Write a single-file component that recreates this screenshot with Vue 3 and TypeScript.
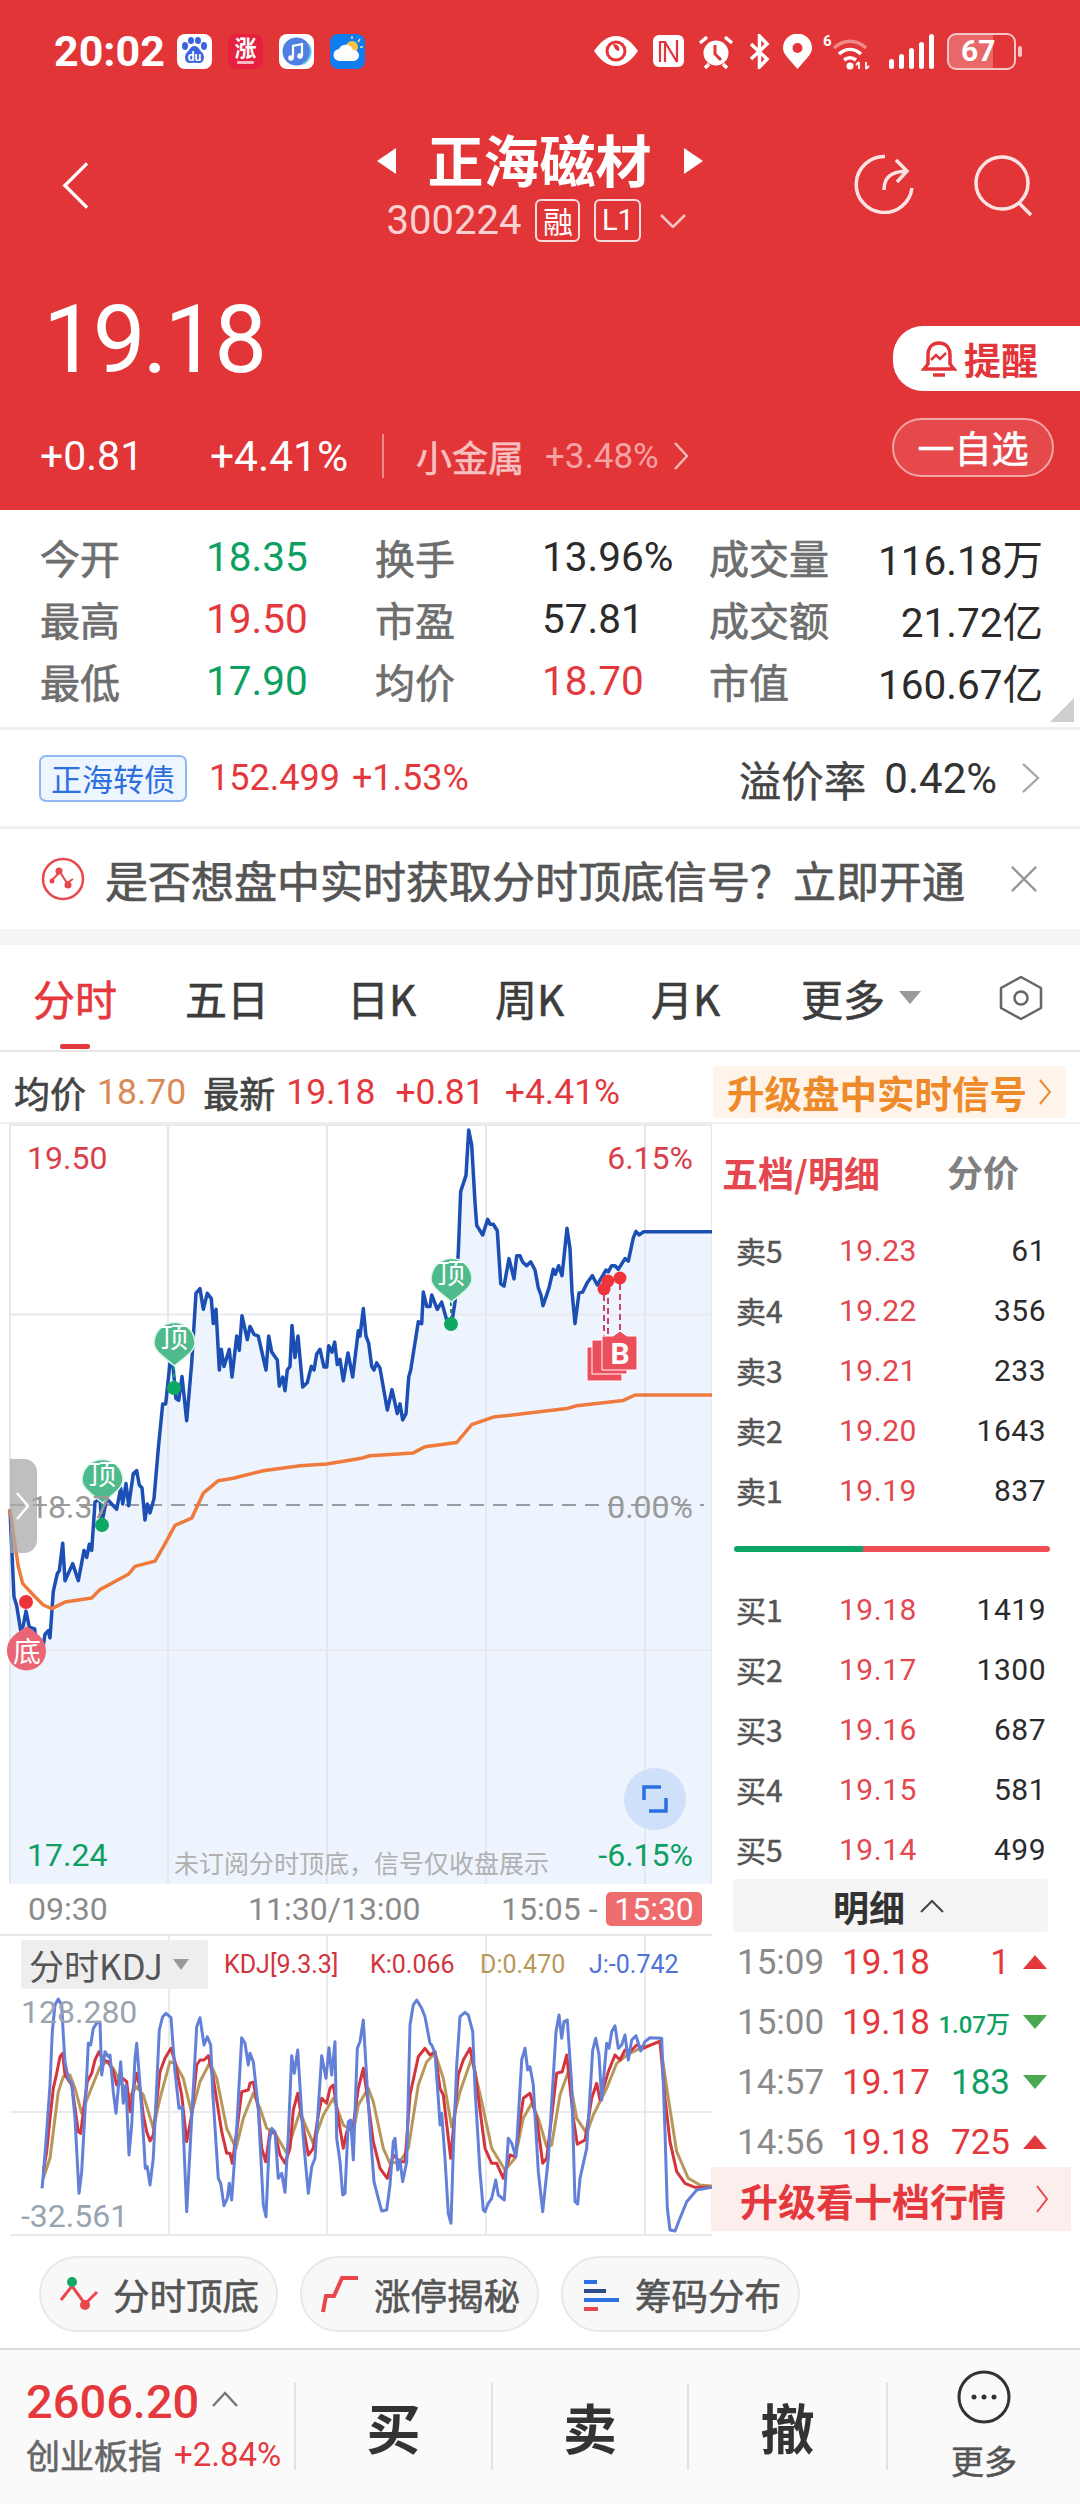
<template>
  <div class="page">
    <header class="hero">
      <div class="status">
        <div class="status-left">
          <span class="clock">20:02</span>
          <svg class="app" viewBox="0 0 35 35"><rect width="35" height="35" rx="8" fill="#fff" /><g fill="#3b62e0"><ellipse cx="8" cy="12" rx="3" ry="4" /><ellipse cx="14" cy="6.500" rx="3" ry="3.600" /><ellipse cx="21" cy="6.500" rx="3" ry="3.600" /><ellipse cx="27" cy="12" rx="3" ry="4" /><path d="M17.500 12c-4 0-5 4-8 7-3 4-1 11 4 10 3-.5 5-.5 8 0 5 1 7-6 4-10-3-3-4-7-8-7z" /></g><text x="17.500" y="27" text-anchor="middle" class="app-du">du</text></svg>
          <svg class="app app-gap" viewBox="0 0 35 35"><rect width="35" height="35" rx="8" fill="#e5213f" /><text x="17.500" y="22" text-anchor="middle" class="app-zhang">涨</text><rect x="9" y="27" width="17" height="3" rx="1" fill="#f8b8c2" /></svg>
          <svg class="app app-gap" viewBox="0 0 35 35"><rect width="35" height="35" rx="8" fill="#fff" /><circle cx="17.500" cy="17.500" r="14" fill="#4f7fe0" /><path d="M30 11a14 14 0 0 1-6 19" fill="none" stroke="#67c7e8" stroke-width="2" /><path d="M14 24V12l9-2v12" fill="none" stroke="#fff" stroke-width="2.200" /><circle cx="12" cy="24" r="2.800" fill="#fff" /><circle cx="21" cy="22" r="2.800" fill="#fff" /></svg>
          <svg class="app app-gap" viewBox="0 0 35 35"><rect width="35" height="35" rx="8" fill="#0f7cf0" /><circle cx="22" cy="13" r="6" fill="#f6c344" /><path d="M22 2v3M30 5l-2 3M33 13h-3" stroke="#f6e09a" stroke-width="1.500" /><path d="M10 27a6 6 0 0 1-1-12 7.500 7.500 0 0 1 14 1 5.500 5.500 0 0 1 1 11z" fill="#fff" /></svg>
        </div>
        <div class="status-right">
          <svg class="s-eye" viewBox="0 0 46 32"><path d="M1 16C8 6 15 1 23 1s15 5 22 15c-7 10-14 15-22 15S8 26 1 16z" fill="#fff" /><circle cx="23" cy="16" r="10.500" fill="#e33539" /><circle cx="23" cy="16" r="7.500" fill="#fff" /><path d="M20 9c5 0 7 3 6 7-3 0-5-3-6-7z" fill="#e33539" /></svg>
          <svg class="s-n" viewBox="0 0 31 32"><rect x="0" y="0" width="31" height="32" rx="6" fill="#fff" /><path d="M7 27V7l5 0v20M24 27V5M12 7l12 20" fill="none" stroke="#e33539" stroke-width="2.200" /></svg>
          <svg class="s-alarm" viewBox="0 0 36 35"><circle cx="18" cy="19" r="12.500" fill="#fff" /><path d="M17 11v9l6 6" fill="none" stroke="#e33539" stroke-width="3" /><path d="M2 9l7-6M34 9l-7-6M7 34l4-4M29 34l-4-4" fill="none" stroke="#fff" stroke-width="3.500" /></svg>
          <svg class="s-bt" viewBox="0 0 22 35"><path d="M3 10l16 15-7.500 8V2L19 10 3 25" fill="none" stroke="#fff" stroke-width="3.500" /></svg>
          <svg class="s-pin" viewBox="0 0 29 35"><path d="M14.500 35C6 25 0 20 0 14a14.500 14.500 0 0 1 29 0c0 6-6 11-14.500 21z" fill="#fff" /><circle cx="14.500" cy="14" r="5" fill="#e33539" /></svg>
          <svg class="s-wifi" viewBox="0 0 50 37"><text x="0" y="13" class="wifi-six">6</text><path d="M11 15c10-9 22-9 32 0" fill="none" stroke="#f08a88" stroke-width="3.500" /><path d="M16 21c7-6 15-6 22 0M21 27c4-3 8-3 12 0" fill="none" stroke="#fff" stroke-width="3.500" /><circle cx="27" cy="33" r="3.500" fill="#fff" /><path d="M36 36v-7M33 32l3-3M43 29v7M46 33l-3 3" stroke="#fff" stroke-width="1.800" fill="none" /></svg>
          <svg class="s-signal" viewBox="0 0 45 35"><g fill="#fff"><rect x="0" y="25" width="5" height="10" rx="2.500" /><rect x="10" y="20" width="5" height="15" rx="2.500" /><rect x="20" y="14" width="5" height="21" rx="2.500" /><rect x="30" y="8" width="5" height="27" rx="2.500" /><rect x="40" y="0" width="5" height="35" rx="2.500" /></g></svg>
          <div class="battery"><span class="battery-num">67</span></div>
          <i class="battery-tip"></i>
        </div>
      </div>

      <div class="nav">
        <svg class="back" viewBox="0 0 28 50"><path d="M26 2L3 25l23 23" fill="none" stroke="#fff" stroke-width="3.500" /></svg>
        <div class="nav-center">
          <div class="title-row">
            <i class="arrow-left"></i>
            <span class="title">正海磁材</span>
            <i class="arrow-right"></i>
          </div>
          <div class="code-row">
            <span class="code">300224</span>
            <span class="code-tag">融</span>
            <span class="code-tag code-tag-l1">L1</span>
            <svg class="code-chev" viewBox="0 0 26 14"><path d="M1 1l12 12L25 1" fill="none" stroke="#f7c4c4" stroke-width="2.500" /></svg>
          </div>
        </div>
        <div class="nav-right">
          <svg class="share" viewBox="0 0 60 60"><path d="M31 2.500A28 28 0 1 0 58 34" fill="none" stroke="#fce3e3" stroke-width="3.500" /><path d="M30 36c0-12 6-18 22-19M42 6l11 11-10 11" fill="none" stroke="#fce3e3" stroke-width="3.500" /></svg>
          <svg class="search" viewBox="0 0 60 62"><circle cx="29" cy="29" r="26" fill="none" stroke="#fce3e3" stroke-width="3.500" /><path d="M46 49l12 12" stroke="#fce3e3" stroke-width="3.500" /></svg>
        </div>
      </div>

      <div class="quote">
        <div class="quote-left">
          <div class="price">19.18</div>
          <div class="changes">
            <span class="chg-a">+0.81</span>
            <span class="chg-b">+4.41%</span>
            <i class="chg-sep"></i>
            <span class="sector">小金属</span>
            <span class="sector-pct">+3.48%</span>
            <svg class="sector-chev" viewBox="0 0 14 28"><path d="M1 1l12 13L1 27" fill="none" stroke="#f5b5b5" stroke-width="2.500" /></svg>
          </div>
        </div>
        <div class="quote-right">
          <div class="btn-remind">
            <svg class="bell" viewBox="0 0 36 38"><path d="M18 3c-7 0-11 5-11 12v9l-4 5h30l-4-5v-9C29 8 25 3 18 3z" fill="none" stroke="#e33539" stroke-width="3.500" /><path d="M12 35h12" stroke="#e33539" stroke-width="3.500" /><path d="M10 20l5-5 4 4 6-6" fill="none" stroke="#e33539" stroke-width="2.500" /></svg>
            <span>提醒</span>
          </div>
          <div class="btn-fav">一自选</div>
        </div>
      </div>
    </header>

    <section class="stats">
      <template v-for="row in statRows" :key="row[0].label">
        <template v-for="(cell, i) in row" :key="cell.label">
          <span class="stat-label">{{ cell.label }}</span>
          <span class="stat-value" :class="[cell.color, { 'stat-end': i === 2 }]">{{ cell.value }}</span>
        </template>
      </template>
      <i class="stat-corner"></i>
    </section>

    <section class="bond">
      <span class="bond-tag">正海转债</span>
      <span class="bond-price">152.499</span>
      <span class="bond-pct">+1.53%</span>
      <span class="bond-spacer"></span>
      <span class="bond-label">溢价率</span>
      <span class="bond-rate">0.42%</span>
      <svg class="bond-chev" viewBox="0 0 20 32"><path d="M2 1l16 15L2 31" fill="none" stroke="#a8a8a8" stroke-width="2.500" /></svg>
    </section>

    <section class="notice">
      <svg class="notice-icon" viewBox="0 0 44 44"><circle cx="22" cy="22" r="20" fill="none" stroke="#e8474c" stroke-width="2.500" /><path d="M11 23l8-8 7 11 6-4" fill="none" stroke="#e8474c" stroke-width="2" /><circle cx="18" cy="14" r="3.500" fill="#e8474c" /><circle cx="11" cy="24" r="2.500" fill="#e8474c" /><circle cx="27" cy="28" r="3.500" fill="#e8474c" /></svg>
      <span class="notice-text">是否想盘中实时获取分时顶底信号？立即开通</span>
      <svg class="notice-close" viewBox="0 0 28 28"><path d="M1 1l26 26M27 1L1 27" stroke="#999" stroke-width="2.500" /></svg>
    </section>
    <div class="strip"></div>

    <nav class="tabs">
      <span class="tab tab-on">分时</span>
      <span class="tab">五日</span>
      <span class="tab">日K</span>
      <span class="tab">周K</span>
      <span class="tab">月K</span>
      <span class="tab tab-more">更多<i class="tab-tri"></i></span>
      <svg class="tab-gear" viewBox="0 0 44 46"><path d="M22 2l20 11v20L22 44 2 33V13z" fill="none" stroke="#666" stroke-width="2.500" stroke-linejoin="round" /><circle cx="22" cy="23" r="6.500" fill="none" stroke="#666" stroke-width="2.500" /></svg>
    </nav>

    <section class="info">
      <span class="info-group"><b class="info-label">均价</b><span class="c-orange">18.70</span></span>
      <span class="info-group"><b class="info-label">最新</b><span class="c-red">19.18</span></span>
      <span class="c-red info-a">+0.81</span>
      <span class="c-red info-b">+4.41%</span>
      <span class="info-up">升级盘中实时信号<svg class="info-chev" viewBox="0 0 12 26"><path d="M1 1l10 12L1 25" fill="none" stroke="#ee8a2a" stroke-width="2" /></svg></span>
    </section>

    <div class="trade">
      <div class="trade-left">
        <div class="chart">
          <svg class="chart-svg" viewBox="0 1124 712 760">
            <polygon :points="fillPoints" fill="#eef4fd" />
            <path v-for="x in gridX" :key="x" :d="`M${x} 1124V1884`" stroke="#e4e7ed" stroke-width="2" />
            <path d="M10 1314.500H712M10 1650H712M10 1125H712" stroke="#e8eaee" stroke-width="2" fill="none" />
            <path d="M10 1505H704" stroke="#9a9ca3" stroke-width="2" stroke-dasharray="14 9" fill="none" />
            <polyline :points="bluePoints" fill="none" stroke="#1c4fb4" stroke-width="3.500" stroke-linejoin="round" />
            <polyline :points="avgPoints" fill="none" stroke="#ee7a3d" stroke-width="3.500" stroke-linejoin="round" />

            <g v-for="m in topMarks" :key="m.x">
              <path :d="`M${m.x} ${m.cy + 46}V${m.cy + 22}`" stroke="#129e63" stroke-width="2" stroke-dasharray="4 3" />
              <circle :cx="m.x" :cy="m.cy + 50" r="7" fill="#0ea763" />
              <path :d="`M${m.x - 20} ${m.cy + 5}a20.500 20.500 0 1 1 41 0c0 8-10 14-20.500 23C${m.x - 10} ${m.cy + 19} ${m.x - 20} ${m.cy + 13} ${m.x - 20} ${m.cy + 5}z`" fill="#4fbb8c" stroke="#dff5ea" stroke-width="1.500" />
              <text :x="m.x" :y="m.cy + 10" text-anchor="middle" class="mark-text">顶</text>
            </g>

            <circle cx="26" cy="1602" r="7" fill="#ee333b" />
            <path d="M27 1626c7 6 19 11 19 25a19.500 19.500 0 0 1-39 0c0-14 12-19 20-25z" fill="#ea6675" />
            <text x="27" y="1662" text-anchor="middle" class="mark-text">底</text>

            <path d="M604 1295V1336M608 1288V1336M620 1284V1332" stroke="#d2406a" stroke-width="2" stroke-dasharray="6 4" />
            <circle cx="604" cy="1289" r="6.500" fill="#ee333b" />
            <circle cx="608" cy="1281" r="6.500" fill="#ee333b" />
            <circle cx="620" cy="1278" r="6.500" fill="#ee333b" />
            <rect x="587" y="1347" width="35" height="34" fill="#ea4f5b" stroke="#fff" stroke-width="1" />
            <rect x="592" y="1340" width="35" height="34" fill="#ea4f5b" stroke="#fff" stroke-width="1" />
            <path d="M602 1336h11l7-5 7 5h10v34h-35z" fill="#ea4f5b" stroke="#fff" stroke-width="1" />
            <text x="620" y="1364" text-anchor="middle" class="mark-b">B</text>

            <circle cx="655" cy="1799" r="31" fill="#cfe0fb" />
            <path d="M661 1787h-17v13M649 1811h17v-13" fill="none" stroke="#2c6fe0" stroke-width="3.500" />
          </svg>
          <span class="lbl lbl-tl">19.50</span>
          <span class="lbl lbl-tr">6.15%</span>
          <span class="lbl lbl-ml">18.37</span>
          <span class="lbl lbl-mr">0.00%</span>
          <span class="lbl lbl-bl">17.24</span>
          <span class="lbl lbl-br">-6.15%</span>
          <span class="chart-tip">未订阅分时顶底，信号仅收盘展示</span>
          <div class="handle">
            <svg viewBox="0 0 14 30"><path d="M1 1l12 14L1 29" fill="none" stroke="#fff" stroke-width="2.500" /></svg>
          </div>
        </div>

        <div class="axis">
          <span class="axis-a">09:30</span>
          <span class="axis-b">11:30/13:00</span>
          <span class="axis-c">15:05 -</span>
          <span class="axis-badge">15:30</span>
        </div>

        <div class="kdj">
          <svg class="kdj-svg" viewBox="0 1936 712 300">
            <path v-for="x in kdjGridX" :key="x" :d="`M${x} 1936V2236`" stroke="#e8eaee" stroke-width="2" />
            <path d="M10 2112H712M10 2235H712" stroke="#e8eaee" stroke-width="2" fill="none" />
            <polyline :points="dPoints" fill="none" stroke="#b8985a" stroke-width="3" stroke-linejoin="round" />
            <polyline :points="kPoints" fill="none" stroke="#d6343c" stroke-width="3" stroke-linejoin="round" />
            <polyline :points="jPoints" fill="none" stroke="#6380d8" stroke-width="3" stroke-linejoin="round" />
          </svg>
          <div class="kdj-head">
            <span class="kdj-chip">分时KDJ<i class="kdj-tri"></i></span>
            <span class="kdj-p kdj-red kdj-p1">KDJ[9.3.3]</span>
            <span class="kdj-p kdj-red kdj-p2">K:0.066</span>
            <span class="kdj-p kdj-tan kdj-p3">D:0.470</span>
            <span class="kdj-p kdj-blue kdj-p4">J:-0.742</span>
          </div>
          <span class="kdj-max">128.280</span>
          <span class="kdj-min">-32.561</span>
        </div>
      </div>

      <aside class="panel">
        <div class="panel-head">
          <span class="panel-title">五档/明细</span>
          <span class="panel-sub">分价</span>
        </div>
        <div v-for="r in sells" :key="r.name" class="level">
          <span class="level-name">{{ r.name }}</span>
          <span class="level-price">{{ r.price }}</span>
          <span class="level-vol">{{ r.vol }}</span>
        </div>
        <div class="ratio"><i class="ratio-green"></i><i class="ratio-red"></i></div>
        <div v-for="r in buys" :key="r.name" class="level">
          <span class="level-name">{{ r.name }}</span>
          <span class="level-price">{{ r.price }}</span>
          <span class="level-vol">{{ r.vol }}</span>
        </div>
        <div class="detail-head">
          <span>明细</span>
          <svg viewBox="0 0 24 14"><path d="M1 13L12 2l11 11" fill="none" stroke="#444" stroke-width="2" /></svg>
        </div>
        <div v-for="t in ticks" :key="t.time" class="tick">
          <span class="tick-time">{{ t.time }}</span>
          <span class="tick-price">{{ t.price }}</span>
          <span class="tick-vol" :class="[t.color, { 'tick-small': t.vol.length > 4 }]">{{ t.vol }}</span>
          <i :class="t.up ? 'tri-up' : 'tri-down'"></i>
        </div>
        <div class="panel-up">
          <span>升级看十档行情</span>
          <svg viewBox="0 0 12 28"><path d="M1 1l10 13L1 27" fill="none" stroke="#e8474c" stroke-width="2" /></svg>
        </div>
      </aside>
    </div>

    <section class="pills">
      <div class="pill">
        <svg viewBox="0 0 40 40"><path d="M2 26l11-14 13 18 12-12" fill="none" stroke="#e8474c" stroke-width="3" /><circle cx="13" cy="8" r="5" fill="#10a765" /><circle cx="26" cy="31" r="5" fill="#e8474c" /></svg>
        <span>分时顶底</span>
      </div>
      <div class="pill">
        <svg viewBox="0 0 40 40"><path d="M3 38l3-16h8l8-18h16" fill="none" stroke="#e8474c" stroke-width="4" /></svg>
        <span>涨停揭秘</span>
      </div>
      <div class="pill">
        <svg viewBox="0 0 40 40"><path d="M3 8h13" stroke="#2c6fe0" stroke-width="4" /><path d="M3 17h22" stroke="#2c4a8c" stroke-width="4" /><path d="M3 26h35" stroke="#2c6fe0" stroke-width="4" /><path d="M3 35h14" stroke="#e8474c" stroke-width="4" /></svg>
        <span>筹码分布</span>
      </div>
    </section>

    <footer class="bottom">
      <div class="cell cell-index">
        <div class="index-top">
          <span class="index-num">2606.20</span>
          <svg viewBox="0 0 26 16"><path d="M1 15L13 2l12 13" fill="none" stroke="#777" stroke-width="2.500" /></svg>
        </div>
        <div class="index-sub"><span class="index-name">创业板指</span><span class="index-pct">+2.84%</span></div>
      </div>
      <div class="cell cell-act">买</div>
      <div class="cell cell-act">卖</div>
      <div class="cell cell-act">撤</div>
      <div class="cell cell-more">
        <svg viewBox="0 0 54 54"><circle cx="27" cy="27" r="25" fill="none" stroke="#333" stroke-width="3" /><circle cx="17" cy="27" r="2.500" fill="#333" /><circle cx="27" cy="27" r="2.500" fill="#333" /><circle cx="37" cy="27" r="2.500" fill="#333" /></svg>
        <span>更多</span>
      </div>
    </footer>
  </div>
</template>

<script setup lang="ts">
type Pt = [number, number];

const statRows = [
  [
    { label: '今开', value: '18.35', color: 'c-green' },
    { label: '换手', value: '13.96%', color: 'c-dark' },
    { label: '成交量', value: '116.18万', color: 'c-dark' },
  ],
  [
    { label: '最高', value: '19.50', color: 'c-red' },
    { label: '市盈', value: '57.81', color: 'c-dark' },
    { label: '成交额', value: '21.72亿', color: 'c-dark' },
  ],
  [
    { label: '最低', value: '17.90', color: 'c-green' },
    { label: '均价', value: '18.70', color: 'c-red' },
    { label: '市值', value: '160.67亿', color: 'c-dark' },
  ],
];

const sells = [
  { name: '卖5', price: '19.23', vol: '61' },
  { name: '卖4', price: '19.22', vol: '356' },
  { name: '卖3', price: '19.21', vol: '233' },
  { name: '卖2', price: '19.20', vol: '1643' },
  { name: '卖1', price: '19.19', vol: '837' },
];
const buys = [
  { name: '买1', price: '19.18', vol: '1419' },
  { name: '买2', price: '19.17', vol: '1300' },
  { name: '买3', price: '19.16', vol: '687' },
  { name: '买4', price: '19.15', vol: '581' },
  { name: '买5', price: '19.14', vol: '499' },
];
const ticks = [
  { time: '15:09', price: '19.18', vol: '1', color: 'c-red', up: true },
  { time: '15:00', price: '19.18', vol: '1.07万', color: 'c-green', up: false },
  { time: '14:57', price: '19.17', vol: '183', color: 'c-green', up: false },
  { time: '14:56', price: '19.18', vol: '725', color: 'c-red', up: true },
];

const gridX = [10, 168, 327, 486, 645, 712];
const kdjGridX = [169, 327, 486, 645];
const topMarks = [
  { x: 102, cy: 1475 },
  { x: 174, cy: 1338 },
  { x: 451, cy: 1274 },
];

// traced from the reference, first half then second half of the day
const blueA: Pt[] = [[30,1090],[42,1335],[50,1360],[62,1430],[70,1415],[78,1375],[88,1420],[104,1425],[108,1460],[125,1500],[135,1440],[145,1430],[150,1450],[160,1320],[172,1270],[178,1262],[188,1185],[195,1290],[218,1242],[235,1290],[252,1205],[260,1225],[268,1188],[275,1205],[285,1070],[300,1060],[305,1130],[320,1060],[350,1090],[362,1030],[368,1075],[378,1018],[386,1080],[400,990],[410,982],[418,1022],[426,1030],[435,1120],[442,1075],[450,1100],[462,1060],[475,920],[488,795],[497,795],[510,680],[518,680],[528,780],[536,785],[546,718],[560,842],[575,680],[588,485],[600,472],[610,530],[622,485],[634,500],[640,570],[648,530],[658,700],[664,642],[672,690],[688,642],[696,720],[710,605],[718,645],[726,548],[742,615],[750,578],[762,600],[775,605],[798,700],[806,605],[815,650],[832,672],[838,745],[848,720],[855,758],[862,700],[870,690],[876,575],[885,665],[894,605],[908,748],[922,735],[934,690],[942,700],[950,655],[960,642],[972,692],[980,692],[986,632],[996,650],[1004,622],[1012,685],[1020,670],[1030,730],[1044,652],[1058,720],[1075,590]];
const blueB: Pt[] = [[0,605],[10,528],[18,605],[26,625],[35,690],[42,700],[50,680],[60,695],[82,812],[96,755],[112,822],[120,795],[128,840],[138,822],[146,720],[152,700],[175,565],[185,570],[190,482],[200,522],[210,522],[215,490],[232,530],[245,510],[260,560],[275,570],[285,510],[295,370],[302,200],[318,155],[326,28],[335,70],[345,230],[350,295],[368,322],[383,278],[390,292],[400,292],[412,310],[422,458],[432,465],[447,388],[462,445],[470,380],[480,380],[488,398],[500,408],[512,397],[525,420],[535,470],[543,490],[549,520],[567,470],[580,418],[586,432],[596,408],[606,436],[621,303],[630,360],[636,480],[645,570],[657,484],[668,482],[682,455],[697,436],[712,462],[738,420],[745,425],[755,408],[765,408],[775,418],[795,388],[805,395],[820,330],[828,312],[838,322],[850,313],[1056,313]];
const avgA: Pt[] = [[30,1090],[42,1170],[55,1250],[68,1298],[100,1330],[130,1358],[155,1368],[195,1350],[275,1338],[300,1315],[385,1272],[405,1250],[465,1235],[490,1195],[525,1135],[575,1115],[590,1085],[610,1045],[655,1010],[700,1003],[790,982],[900,968],[980,963],[1080,948]];
const avgB: Pt[] = [[30,940],[160,932],[195,915],[290,903],[335,853],[400,832],[620,808],[650,800],[790,785],[825,770],[1056,770]];

// KDJ lines, traced in two 3x crops of the lower panel
const jA: Pt[] = [[126,610],[130,570],[140,440],[150,300],[157,140],[165,60],[175,42],[185,60],[190,150],[195,230],[205,280],[215,295],[225,400],[237,625],[245,560],[255,380],[265,175],[272,180],[280,130],[292,112],[300,112],[305,270],[315,200],[325,215],[330,210],[340,320],[348,385],[362,230],[370,355],[378,300],[387,510],[395,420],[405,220],[410,175],[420,300],[432,480],[436,550],[442,545],[450,600],[460,520],[478,135],[488,95],[498,85],[513,98],[525,260],[537,370],[547,365],[560,680],[575,400],[590,125],[600,98],[612,180],[622,155],[632,180],[638,320],[655,580],[662,595],[672,662],[682,640],[688,595],[695,645],[710,430],[725,158],[735,175],[745,240],[750,205],[760,230],[775,370],[790,660],[798,695],[808,470],[815,430],[825,440],[835,580],[845,565],[855,622],[865,450],[875,212],[883,265],[893,195],[910,460],[925,625],[935,545],[945,520],[965,212],[978,280],[987,188],[995,270],[1005,170],[1010,460],[1020,530],[1028,630],[1035,625],[1045,410],[1052,405],[1060,525],[1072,190]];
const jB: Pt[] = [[0,170],[10,105],[20,280],[32,460],[42,590],[55,640],[65,678],[80,675],[90,600],[100,470],[105,460],[113,555],[120,525],[128,590],[140,530],[150,120],[160,60],[170,45],[185,70],[195,95],[210,175],[215,180],[225,205],[235,340],[240,420],[245,385],[255,520],[265,685],[273,715],[280,500],[290,240],[300,95],[315,82],[325,90],[338,140],[345,310],[360,560],[370,675],[375,680],[385,655],[395,640],[407,585],[415,630],[433,645],[445,460],[455,475],[468,515],[485,225],[495,190],[503,255],[510,245],[520,300],[535,560],[548,680],[565,520],[588,140],[597,90],[605,160],[612,110],[622,105],[635,300],[645,650],[653,657],[660,580],[680,490],[698,195],[707,160],[717,210],[725,345],[740,175],[747,190],[755,140],[765,122],[775,190],[785,180],[795,150],[805,225],[815,165],[828,152],[842,198],[855,170],[870,158],[905,160],[915,440],[922,670],[930,735],[945,738],[960,700],[980,650],[1010,615],[1055,607]];
const kA: Pt[] = [[130,560],[140,500],[150,400],[160,310],[170,265],[180,215],[188,205],[195,270],[205,285],[215,300],[225,370],[235,440],[242,445],[250,380],[262,290],[275,265],[285,225],[297,200],[310,225],[325,230],[340,260],[350,300],[362,275],[380,290],[390,380],[400,310],[410,265],[420,310],[430,390],[440,440],[450,468],[460,450],[470,350],[480,260],[495,220],[513,190],[525,230],[537,290],[545,330],[560,470],[575,390],[590,240],[600,225],[612,225],[625,212],[640,280],[650,345],[665,440],[680,505],[690,505],[697,535],[710,440],[725,320],[745,315],[750,295],[760,292],[775,370],[785,490],[797,530],[810,440],[825,445],[840,510],[855,535],[870,490],[880,375],[893,325],[905,400],[925,510],[940,490],[955,390],[965,340],[980,355],[990,310],[1000,300],[1015,400],[1030,490],[1040,440],[1060,420],[1075,310]];
const kB: Pt[] = [[10,250],[20,320],[40,470],[60,550],[82,580],[100,510],[120,530],[135,530],[150,330],[175,215],[195,190],[210,210],[225,200],[240,310],[250,330],[272,520],[295,270],[310,225],[330,190],[345,260],[375,490],[395,535],[410,535],[430,580],[450,510],[465,515],[490,340],[510,325],[530,400],[548,535],[560,520],[590,265],[607,260],[620,210],[640,400],[652,478],[675,465],[695,340],[710,295],[720,345],[745,260],[765,210],[780,225],[795,195],[810,200],[830,180],[850,190],[900,168],[915,340],[930,470],[950,560],[975,595],[1005,607],[1055,607]];
const dA: Pt[] = [[130,580],[150,520],[165,400],[175,320],[190,275],[210,270],[225,310],[245,385],[270,320],[300,245],[320,230],[340,250],[360,290],[390,335],[410,305],[430,330],[460,430],[480,340],[510,230],[525,235],[550,280],[575,385],[600,290],[630,232],[650,280],[680,430],[708,490],[730,400],[760,325],[780,370],[800,430],[825,445],[860,505],[880,440],[900,380],[920,430],[940,475],[970,390],[1000,340],[1030,420],[1060,440],[1075,360]];
const dB: Pt[] = [[25,310],[40,350],[70,490],[90,535],[120,530],[145,490],[175,300],[200,230],[225,205],[250,280],[275,425],[300,320],[335,220],[365,350],[395,490],[435,555],[465,520],[490,400],[515,355],[535,400],[560,485],[575,480],[600,330],[625,260],[650,400],[680,445],[700,390],[740,310],[770,235],[800,210],[840,190],[900,170],[925,340],[950,500],[985,580],[1020,600],[1055,603]];

const toStr = (pts: Pt[]) => pts.map(([x, y]) => `${x.toFixed(1)},${y.toFixed(1)}`).join(' ');
const fromLeft = (pts: Pt[]): Pt[] => pts.map(([x, y]) => [x / 3, 1120 + y / 2.8]);
const fromRight = (pts: Pt[]): Pt[] => pts.map(([x, y]) => [360 + x / 3, 1120 + y / 2.8]);
const kdjLine = (a: Pt[], b: Pt[]) =>
  toStr([
    ...a.map(([x, y]): Pt => [x / 3, 1985 + y / 3]),
    ...b.map(([x, y]): Pt => [360 + x / 3, 1985 + y / 3]),
  ]);

const blue = [...fromLeft(blueA), ...fromRight(blueB)];
const bluePoints = toStr(blue);
const fillPoints = toStr([...blue, [712, 1884], [10, 1884]]);
const avgPoints = toStr([...fromLeft(avgA), ...fromRight(avgB)]);
const jPoints = kdjLine(jA, jB);
const kPoints = kdjLine(kA, kB);
const dPoints = kdjLine(dA, dB);
</script>

<style scoped>
.page {
  width: 1080px;
  height: 2504px;
  overflow: hidden;
  display: flex;
  flex-direction: column;
  background: #fff;
  color: #333;
  font-family: Roboto, "Noto Sans CJK SC", sans-serif;
}
.hero {
  height: 510px;
  flex: none;
  background: #e23538;
  color: #fff;
  padding-top: 26px;
  box-sizing: border-box;
}
.status {
  height: 50px;
  display: flex;
  justify-content: space-between;
  padding: 0 58px 0 54px;
}
.status-left, .status-right { display: flex; align-items: center; }
.clock { font-size: 43px; font-weight: 700; line-height: 50px; width: 123px; white-space: nowrap; }
.app { width: 35px; height: 35px; display: block; }
.app-gap { margin-left: 16px; }
.app-du { font-size: 12px; font-weight: 700; fill: #fff; font-family: Roboto, sans-serif; }
.app-zhang { font-size: 22px; font-weight: 700; fill: #fff; font-family: "Noto Sans CJK SC", sans-serif; }
.s-eye { width: 46px; height: 32px; }
.s-n { width: 31px; height: 32px; margin-left: 14px; }
.s-alarm { width: 36px; height: 35px; margin-left: 14px; }
.s-bt { width: 22px; height: 35px; margin-left: 14px; }
.s-pin { width: 29px; height: 35px; margin-left: 13px; }
.s-wifi { width: 50px; height: 37px; margin-left: 11px; }
.wifi-six { font-size: 15px; font-weight: 700; fill: #fff; font-family: Roboto, sans-serif; }
.s-signal { width: 45px; height: 35px; margin-left: 16px; }
.battery {
  width: 69px;
  height: 37px;
  margin-left: 13px;
  box-sizing: border-box;
  border: 2px solid #f6c6c6;
  border-radius: 9px;
  display: flex;
  align-items: center;
  padding-left: 12px;
  background: linear-gradient(90deg, rgba(255,255,255,.25) 67%, transparent 67%);
}
.battery-num { font-size: 30px; font-weight: 700; line-height: 30px; }
.battery-tip { width: 4px; height: 11px; margin-left: 2px; background: #f6c6c6; border-radius: 2px; }

.nav {
  margin-top: 58px;
  height: 108px;
  display: grid;
  grid-template-columns: 1fr auto 1fr;
  padding: 0 47px 0 62px;
}
.back { width: 27px; height: 49px; margin-top: 27px; }
.nav-center { display: flex; flex-direction: column; align-items: center; width: 326px; margin-left: -8px; margin-right: 8px; }
.title-row { display: flex; align-items: center; height: 48px; justify-content: space-between; width: 100%; }
.title { font-size: 56px; font-weight: 700; line-height: 48px; font-family: "Noto Sans CJK SC", sans-serif; }
.arrow-left { width: 0; height: 0; border: 13px solid transparent; border-left: 0; border-right: 19px solid #fff; margin-top: 6px; }
.arrow-right { width: 0; height: 0; border: 13px solid transparent; border-right: 0; border-left: 19px solid #fff; margin-top: 6px; }
.code-row { display: flex; align-items: center; margin-top: 17px; height: 43px; margin-right: 6px; }
.code { font-size: 40px; line-height: 43px; color: #fbd2d2; }
.code-tag {
  width: 45px;
  height: 43px;
  box-sizing: border-box;
  margin-left: 14px;
  border: 2px solid #fbdcdc;
  border-radius: 6px;
  font-size: 30px;
  line-height: 38px;
  text-align: center;
  font-family: "Noto Sans CJK SC", sans-serif;
}
.code-tag-l1 { width: 47px; font-family: Roboto, sans-serif; font-size: 29px; }
.code-chev { width: 26px; height: 14px; margin-left: 19px; }
.nav-right { display: flex; justify-content: flex-end; gap: 59px; padding-top: 20px; }
.share { width: 60px; height: 60px; }
.search { width: 60px; height: 62px; }

.quote { display: flex; justify-content: space-between; }
.quote-left { padding-left: 40px; }
.price { margin: 65px 0 0 3px; font-size: 94px; line-height: 66px; letter-spacing: -3px; }
.changes { display: flex; align-items: center; margin-top: 61px; height: 44px; }
.chg-a { font-size: 41px; width: 170px; }
.chg-b { font-size: 42.500px; width: 172px; white-space: nowrap; }
.chg-sep { width: 2px; height: 44px; background: #ee8a8a; }
.sector { margin-left: 32px; font-size: 36px; color: #f9c0c0; -webkit-text-stroke: .6px #f9c0c0; font-family: "Noto Sans CJK SC", sans-serif; }
.sector-pct { margin-left: 21px; font-size: 35px; color: #f6a3a3; }
.sector-chev { width: 14px; height: 28px; margin-left: 15px; }
.quote-right { display: flex; flex-direction: column; align-items: flex-end; padding-top: 84px; }
.btn-remind {
  width: 187px;
  height: 65px;
  box-sizing: border-box;
  padding-left: 28px;
  background: #fff;
  border-radius: 30px 0 0 30px;
  display: flex;
  align-items: center;
  color: #e33539;
  font-size: 37px;
  font-weight: 700;
  font-family: "Noto Sans CJK SC", sans-serif;
}
.bell { width: 36px; height: 38px; margin-right: 7px; }
.btn-fav {
  width: 162px;
  height: 59px;
  margin: 27px 26px 0 0;
  box-sizing: border-box;
  border: 2px solid #f3a6a6;
  border-radius: 30px;
  background: rgba(255, 255, 255, .1);
  font-size: 37px;
  line-height: 54px;
  text-align: center;
  -webkit-text-stroke: .6px #fff;
  font-family: "Noto Sans CJK SC", sans-serif;
}

.stats {
  position: relative;
  flex: none;
  height: 220px;
  box-sizing: border-box;
  padding: 16px 37px 0 40px;
  border-bottom: 3px solid #f0f0f0;
  display: grid;
  grid-template-columns: 166px 169px 167px 167px 120px 1fr;
  grid-template-rows: 62px 62px 62px;
  align-items: center;
}
.stat-label { font-size: 40px; color: #6e6e6e; -webkit-text-stroke: .7px #6e6e6e; font-family: "Noto Sans CJK SC", sans-serif; white-space: nowrap; }
.stat-value { font-size: 40.500px; white-space: nowrap; }
.stat-end { text-align: right; }
.stat-corner {
  position: absolute;
  right: 6px;
  bottom: 5px;
  width: 0;
  height: 0;
  border-left: 24px solid transparent;
  border-bottom: 24px solid #cfcfcf;
}
.c-green { color: #0e9f62; }
.c-red { color: #e5383d; }
.c-dark { color: #2b2b2b; }
.c-orange { color: #d98a55; }

.bond {
  flex: none;
  height: 99px;
  box-sizing: border-box;
  padding: 0 40px 0 39px;
  border-bottom: 3px solid #f0f0f0;
  display: flex;
  align-items: center;
}
.bond-tag {
  width: 148px;
  height: 47px;
  box-sizing: border-box;
  border: 2px solid #8fb8f0;
  border-radius: 7px;
  background: #edf5ff;
  color: #2d6fdc;
  font-size: 31px;
  line-height: 42px;
  text-align: center;
  font-family: "Noto Sans CJK SC", sans-serif;
}
.bond-price { margin-left: 22px; font-size: 36px; color: #e5383d; }
.bond-pct { margin-left: 12px; font-size: 36px; color: #e5383d; }
.bond-spacer { flex: 1; }
.bond-label { font-size: 42.500px; color: #444; -webkit-text-stroke: .4px #444; font-family: "Noto Sans CJK SC", sans-serif; }
.bond-rate { margin-left: 18px; font-size: 42px; color: #333; }
.bond-chev { width: 19px; height: 30px; margin-left: 24px; }

.notice {
  flex: none;
  height: 100px;
  box-sizing: border-box;
  padding: 0 42px 0 41px;
  display: flex;
  align-items: center;
}
.notice-icon { width: 44px; height: 44px; flex: none; }
.notice-text {
  margin-left: 20px;
  width: 857px;
  flex: none;
  font-size: 43px;
  color: #555;
  -webkit-text-stroke: .7px #555;
  white-space: nowrap;
  font-family: "Noto Sans CJK SC", sans-serif;
}
.notice-close { width: 28px; height: 26px; margin-left: 48px; flex: none; }
.strip { flex: none; height: 16px; background: #f5f5f5; }

.tabs {
  flex: none;
  height: 107px;
  box-sizing: border-box;
  padding-left: 33px;
  border-bottom: 2px solid #e6e6e6;
  display: grid;
  grid-template-columns: 152px 162px 148px 156px 150px 198px 44px;
  align-items: center;
  position: relative;
}
.tab { font-size: 42px; color: #3c3c3c; -webkit-text-stroke: .6px #3c3c3c; white-space: nowrap; font-family: "Noto Sans CJK SC", Roboto, sans-serif; }
.tab-on { color: #e5383d; -webkit-text-stroke: .6px #e5383d; position: relative; }
.tab-on::after {
  content: "";
  position: absolute;
  left: 27px;
  bottom: -21px;
  width: 30px;
  height: 5px;
  background: #e5383d;
  border-radius: 2px;
}
.tab-more { display: flex; align-items: center; }
.tab-tri {
  margin-left: 14px;
  width: 0;
  height: 0;
  border: 11px solid transparent;
  border-bottom: 0;
  border-top: 13px solid #999;
}
.tab-gear { width: 44px; height: 46px; }

.info {
  flex: none;
  height: 72px;
  box-sizing: border-box;
  padding: 9px 14px 0 14px;
  border-bottom: 2px solid #eee;
  display: flex;
  align-items: center;
  font-size: 35.500px;
  white-space: nowrap;
}
.info-group { display: flex; gap: 11px; margin-right: 17px; align-items: center; }
.info-label { font-weight: 400; font-size: 36px; color: #444; -webkit-text-stroke: .7px #444; font-family: "Noto Sans CJK SC", sans-serif; }
.info-a { margin-right: 20px; margin-left: 3px; }
.info-up {
  margin-left: auto;
  width: 353px;
  height: 52px;
  box-sizing: border-box;
  padding-left: 14px;
  background: #fff4ea;
  color: #ee8a2a;
  font-size: 37.500px;
  font-weight: 700;
  display: flex;
  align-items: center;
  font-family: "Noto Sans CJK SC", sans-serif;
}
.info-chev { width: 12px; height: 26px; margin-left: 12px; }

.trade { flex: none; height: 1112px; display: flex; }
.trade-left { width: 712px; flex: none; }
.chart { position: relative; height: 760px; }
.chart-svg { display: block; width: 712px; height: 760px; }
.mark-text { font-size: 28px; fill: #fff; font-family: "Noto Sans CJK SC", sans-serif; }
.mark-b { font-size: 30px; font-weight: 700; fill: #fff; font-family: Roboto, sans-serif; }
.lbl { position: absolute; font-size: 32px; line-height: 32px; }
.lbl-tl { left: 27px; top: 18px; color: #d9404a; }
.lbl-tr { right: 19px; top: 18px; color: #d9404a; }
.lbl-ml { left: 30px; top: 367px; color: #999; }
.lbl-mr { right: 19px; top: 367px; color: #999; }
.lbl-bl { left: 27px; top: 715px; color: #0e9f62; }
.lbl-br { right: 19px; top: 715px; color: #0e9f62; }
.chart-tip {
  position: absolute;
  left: 174px;
  top: 723px;
  font-size: 25px;
  line-height: 30px;
  color: #b0b0b0;
  white-space: nowrap;
  font-family: "Noto Sans CJK SC", sans-serif;
}
.handle {
  position: absolute;
  left: 10px;
  top: 335px;
  width: 27px;
  height: 94px;
  background: rgba(170, 170, 170, .75);
  border-radius: 0 13px 13px 0;
  display: flex;
  align-items: center;
  padding-left: 6px;
  box-sizing: border-box;
}
.handle svg { width: 13px; height: 30px; }

.axis {
  height: 52px;
  box-sizing: border-box;
  border-bottom: 2px solid #e8e8e8;
  position: relative;
  display: grid;
  grid-template-columns: 248px 253px 105px 96px;
  padding-left: 0;
  align-items: center;
  font-size: 32px;
  color: #8a8a8a;
}
.axis-a { padding-left: 28px; }
.axis-badge {
  height: 34px;
  background: #ee6b6e;
  color: #fff;
  border-radius: 5px;
  line-height: 34px;
  text-align: center;
}

.kdj { position: relative; height: 300px; }
.kdj-svg { display: block; width: 712px; height: 300px; position: absolute; left: 0; top: 0; }
.kdj-head { position: relative; display: flex; align-items: center; padding: 4px 0 0 21px; height: 49px; white-space: nowrap; }
.kdj-chip {
  width: 187px;
  height: 49px;
  box-sizing: border-box;
  padding-left: 8px;
  background: #eeeeee;
  border-radius: 3px;
  display: flex;
  align-items: center;
  font-size: 35px;
  color: #555;
  font-family: "Noto Sans CJK SC", Roboto, sans-serif;
}
.kdj-tri {
  margin-left: 10px;
  width: 0;
  height: 0;
  border: 8px solid transparent;
  border-bottom: 0;
  border-top: 11px solid #999;
}
.kdj-p { font-size: 25px; line-height: 49px; }
.kdj-p1 { margin-left: 16px; width: 146px; }
.kdj-p2 { width: 110px; }
.kdj-p3 { width: 109px; }
.kdj-red { color: #d1343c; }
.kdj-tan { color: #b8985a; }
.kdj-blue { color: #4f73d6; }
.kdj-max, .kdj-min { position: absolute; left: 21px; font-size: 32px; line-height: 32px; color: #98a5b0; }
.kdj-max { top: 60px; }
.kdj-min { top: 264px; }

.panel { flex: 1; padding-top: 2px; box-sizing: border-box; }
.panel-head { height: 94px; display: flex; padding: 0 0 0 10px; align-items: flex-start; }
.panel-title { margin-top: 26px; font-size: 36px; font-weight: 700; line-height: 40px; width: 225px; color: #e5474f; white-space: nowrap; font-family: "Noto Sans CJK SC", sans-serif; }
.panel-sub { margin-top: 25px; font-size: 36px; font-weight: 700; line-height: 40px; color: #808080; font-family: "Noto Sans CJK SC", sans-serif; }
.level {
  height: 60px;
  display: grid;
  grid-template-columns: 103px 110px 97px;
  padding-left: 24px;
  align-items: center;
  font-size: 30px;
}
.level-name { color: #555; -webkit-text-stroke: .5px #555; font-family: "Noto Sans CJK SC", Roboto, sans-serif; }
.level-price { color: #e5474f; letter-spacing: .5px; }
.level-vol { text-align: right; color: #2b2b2b; letter-spacing: .5px; }
.ratio { display: flex; margin: 26px 30px 27px 22px; height: 6px; border-radius: 3px; overflow: hidden; }
.ratio-green { width: 129px; background: #0aa567; }
.ratio-red { flex: 1; background: #f04e54; }
.detail-head {
  margin: 0 32px 0 21px;
  height: 53px;
  background: #f5f5f5;
  border-radius: 4px;
  display: flex;
  align-items: center;
  padding-left: 100px;
  font-size: 36px;
  font-weight: 700;
  color: #333;
  font-family: "Noto Sans CJK SC", sans-serif;
}
.detail-head svg { width: 24px; height: 14px; margin-left: 15px; }
.tick {
  height: 60px;
  display: grid;
  grid-template-columns: 105px 90px 78px 37px;
  padding-left: 25px;
  align-items: center;
  font-size: 35px;
  white-space: nowrap;
}
.tick-time { color: #8a8a8a; }
.tick-price { color: #e5383d; }
.tick-vol { text-align: right; }
.tick-small { font-size: 24px; font-weight: 500; }
.tri-up, .tri-down { width: 0; height: 0; justify-self: end; border: 12px solid transparent; }
.tri-up { border-top: 0; border-bottom: 14px solid #e5383d; }
.tri-down { border-bottom: 0; border-top: 14px solid #4aa84f; }
.panel-up {
  height: 64px;
  margin: -5px 9px 0 -1px;
  padding-left: 29px;
  box-sizing: border-box;
  background: #fdeeee;
  color: #e5383d;
  display: flex;
  align-items: center;
  font-size: 38px;
  font-weight: 700;
  font-family: "Noto Sans CJK SC", sans-serif;
}
.panel-up svg { width: 12px; height: 28px; margin-left: 30px; }

.pills {
  flex: none;
  height: 112px;
  box-sizing: border-box;
  padding: 20px 0 0 39px;
  display: flex;
  gap: 22px;
}
.pill {
  width: 239px;
  height: 76px;
  box-sizing: border-box;
  padding-left: 18px;
  border: 2px solid #e8e8e8;
  border-radius: 38px;
  background: #f8f8f8;
  display: flex;
  align-items: center;
  font-size: 36.500px;
  color: #555;
  -webkit-text-stroke: .6px #555;
  white-space: nowrap;
  font-family: "Noto Sans CJK SC", sans-serif;
}
.pill svg { width: 40px; height: 40px; margin-right: 14px; }

.bottom {
  flex: 1;
  box-sizing: border-box;
  border-top: 2px solid #ddd;
  background: #fafafa;
  display: grid;
  grid-template-columns: 294px 197px 196px 199px 194px;
  align-items: start;
}
.cell { height: 87px; margin-top: 33px; box-sizing: border-box; border-left: 2px solid #e2e2e2; display: flex; align-items: center; justify-content: center; }
.cell-index { border-left: 0; flex-direction: column; align-items: flex-start; padding-left: 26px; }
.index-top { height: 56px; display: flex; align-items: center; }
.index-num { font-size: 47px; font-weight: 500; color: #e5383d; line-height: 56px; }
.index-top svg { width: 26px; height: 16px; margin-left: 13px; margin-bottom: 6px; }
.index-sub { height: 56px; display: flex; align-items: center; white-space: nowrap; }
.index-name { font-size: 34px; color: #666; -webkit-text-stroke: .6px #666; font-family: "Noto Sans CJK SC", sans-serif; }
.index-pct { margin-left: 12px; font-size: 33px; color: #e5383d; }
.cell-act { font-size: 54px; font-weight: 700; color: #333; font-family: "Noto Sans CJK SC", sans-serif; }
.cell-more { flex-direction: column; font-size: 33px; color: #555; -webkit-text-stroke: .5px #555; font-family: "Noto Sans CJK SC", sans-serif; }
.cell-more svg { width: 54px; height: 54px; flex: none; margin-bottom: 12px; }
</style>

<style>
html, body { margin: 0; padding: 0; background: #fff; }
</style>
